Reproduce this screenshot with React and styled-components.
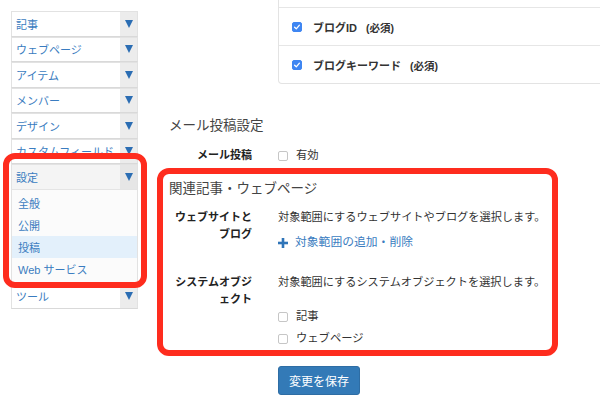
import React from 'react';
import styled, {createGlobalStyle} from "styled-components"

const GlobalStyle = createGlobalStyle`
  html, body {
    margin: 0;
    padding: 0;
    background: #fff;
  }
  body {
    font-family: "Liberation Sans", "Noto Sans CJK JP", sans-serif;
    color: #333;
    font-size: 11px;
  }
`;

const menuItems = ["記事", "ウェブページ", "アイテム", "メンバー", "デザイン", "カスタムフィールド"]
const subItems = ["全般", "公開", "投稿", "Web サービス"]

function Checkbox({checked}){
    return(
        <Box checked={checked}>
            {checked && (
                <svg width="8" height="8" viewBox="0 0 8 8">
                    <path d="M1.6 4.2 L3.3 5.8 L6.4 2.2" fill="none" stroke="#fff" strokeWidth="1.3" strokeLinecap="round" strokeLinejoin="round"/>
                </svg>
            )}
        </Box>
    )
}

export default function App(){
    return(
        <Page>
            <GlobalStyle/>
            <Sidebar>
                {menuItems.map(item => (
                    <MenuItem key={item}>
                        <MenuLabel>{item}</MenuLabel>
                        <Arrow><Triangle/></Arrow>
                    </MenuItem>
                ))}
                <MenuGroup>
                    <MenuItem as="div" open>
                        <MenuLabel>設定</MenuLabel>
                        <Arrow open><Triangle/></Arrow>
                    </MenuItem>
                    <SubMenu>
                        {subItems.map(item => (
                            <SubItem key={item} active={item === "投稿"}>{item}</SubItem>
                        ))}
                    </SubMenu>
                </MenuGroup>
                <MenuItem>
                    <MenuLabel>ツール</MenuLabel>
                    <Arrow><Triangle/></Arrow>
                </MenuItem>
            </Sidebar>

            <Main>
                <FormRow>
                    <Label/>
                    <Panel>
                        <PanelRow cut/>
                        <PanelRow>
                            <Checkbox checked/>
                            <PanelText>ブログID<Required>(必須)</Required></PanelText>
                        </PanelRow>
                        <PanelRow>
                            <Checkbox checked/>
                            <PanelText>ブログキーワード<Required>(必須)</Required></PanelText>
                        </PanelRow>
                    </Panel>
                </FormRow>

                <Heading first>メール投稿設定</Heading>
                <FormRow gap={11}>
                    <Label>メール投稿</Label>
                    <Value>
                        <CheckLine><Checkbox/>有効</CheckLine>
                    </Value>
                </FormRow>

                <Heading>関連記事・ウェブページ</Heading>
                <FormRow gap={10}>
                    <Label>ウェブサイトと<br/>ブログ</Label>
                    <Value>
                        <Text>対象範囲にするウェブサイトやブログを選択します。</Text>
                        <AddLink>
                            <svg width="10" height="10" viewBox="0 0 10 10">
                                <rect x="3.7" y="0" width="2.6" height="10" fill="#2f74b8"/>
                                <rect x="0" y="3.7" width="10" height="2.6" fill="#2f74b8"/>
                            </svg>
                            対象範囲の追加・削除
                        </AddLink>
                    </Value>
                </FormRow>
                <FormRow gap={23}>
                    <Label>システムオブジ<br/>ェクト</Label>
                    <Value>
                        <Text>対象範囲にするシステムオブジェクトを選択します。</Text>
                        <CheckList>
                            <CheckLine><Checkbox/>記事</CheckLine>
                            <CheckLine><Checkbox/>ウェブページ</CheckLine>
                        </CheckList>
                    </Value>
                </FormRow>
                <FormRow gap={19}>
                    <Label/>
                    <Value>
                        <SaveButton>変更を保存</SaveButton>
                    </Value>
                </FormRow>
            </Main>

            <Highlight style={{left: 3, top: 153, width: 144, height: 135}}/>
            <Highlight style={{left: 157, top: 168, width: 401, height: 188}}/>
        </Page>
    )
}


// STYLED COMPONENT
const Page = styled.div`
    position: relative;
    width: 600px;
    height: 407px;
    overflow: hidden;
    display: flex;
    align-items: flex-start;
`;

const Sidebar = styled.nav`
    width: 127px;
    flex: none;
    padding: 11px 0 0 11px;
`;

const MenuItem = styled.a`
    display: flex;
    height: 25.5px;
    box-sizing: border-box;
    border: 1px solid #e2e2e2;
    border-bottom-color: #d9d9d9;
    background: ${p => p.open ? "#f4f4f4" : "#fff"};
    color: #3a7cc0;
    text-decoration: none;
`;

const MenuLabel = styled.span`
    flex: 1;
    display: flex;
    align-items: center;
    padding-left: 4px;
    font-size: 11px;
    white-space: nowrap;
    overflow: hidden;
`;

const Arrow = styled.span`
    width: 17px;
    flex: none;
    display: flex;
    align-items: center;
    justify-content: center;
    background: ${p => p.open ? "#e6e6e6" : "#ececec"};
`;

const Triangle = styled.span`
    width: 0;
    height: 0;
    border-left: 4.5px solid transparent;
    border-right: 4.5px solid transparent;
    border-top: 8px solid #2b6db3;
`;

const MenuGroup = styled.div`
    & > div {
        border-bottom: 1px solid #e4e4e4;
    }
`;

const SubMenu = styled.div`
    padding: 2px 0 3px;
    border: 1px solid #e2e2e2;
    border-top: none;
    background: #fbfbfb;
`;

const SubItem = styled.div`
    height: 22px;
    display: flex;
    align-items: center;
    padding-left: 6px;
    color: #3a7cc0;
    font-size: 11px;
    background: ${p => p.active ? "#e3f0fb" : "transparent"};
`;

const Main = styled.main`
    flex: 1;
    padding-left: 31px;
    margin-right: -10px;
`;

const FormRow = styled.div`
    display: flex;
    align-items: flex-start;
    margin-top: ${p => p.gap || 0}px;
`;

const Label = styled.div`
    width: 83px;
    flex: none;
    margin-right: 26px;
    text-align: right;
    font-weight: bold;
    font-size: 11px;
    line-height: 17px;
    color: #222;
`;

const Value = styled.div`
    flex: 1;
    font-size: 11px;
    line-height: 17px;
`;

const Panel = styled.div`
    flex: 1;
    border: 1px solid #e3e3e3;
    border-top: none;
    border-radius: 0 0 4px 4px;
`;

const PanelRow = styled.div`
    display: flex;
    align-items: center;
    gap: 11px;
    height: ${p => p.cut ? 7 : 37}px;
    padding-left: 13px;
    border-bottom: 1px solid #e6e6e6;
    &:last-child {
        border-bottom: none;
    }
`;

const PanelText = styled.span`
    font-weight: bold;
    font-size: 11px;
    color: #333;
`;

const Required = styled.span`
    margin-left: 9px;
    font-size: 10.5px;
`;

const Heading = styled.h3`
    margin: ${p => p.first ? 32 : 15}px 0 0;
    font-size: 13.5px;
    line-height: 20px;
    font-weight: normal;
    color: #444;
`;

const Box = styled.span`
    width: 10px;
    height: 10px;
    flex: none;
    box-sizing: border-box;
    border-radius: 2px;
    display: inline-flex;
    align-items: center;
    justify-content: center;
    background: ${p => p.checked ? "#3f86f2" : "#fff"};
    border: 1px solid ${p => p.checked ? "#3f86f2" : "#c6c6c6"};
`;

const CheckLine = styled.label`
    display: flex;
    align-items: center;
    gap: 8px;
    height: 17px;
    color: #333;
    font-size: 11.3px;
`;

const CheckList = styled.div`
    margin-top: 17px;
    display: flex;
    flex-direction: column;
    gap: 5px;
`;

const Text = styled.p`
    margin: 0;
    color: #333;
    font-size: 11.2px;
`;

const AddLink = styled.a`
    display: flex;
    align-items: center;
    gap: 7px;
    margin-top: 8px;
    color: #3a7cc0;
    font-size: 11.8px;
`;

const SaveButton = styled.button`
    width: 82px;
    height: 29px;
    border: 1px solid #2e6da4;
    border-radius: 3px;
    background: #337ab7;
    color: #fff;
    font-family: "Liberation Sans", "Noto Sans CJK JP", sans-serif;
    font-size: 12px;
    padding: 0;
`;

const Highlight = styled.div`
    position: absolute;
    box-sizing: border-box;
    border: 6px solid #fe2c1e;
    border-radius: 12px;
    pointer-events: none;
`;
